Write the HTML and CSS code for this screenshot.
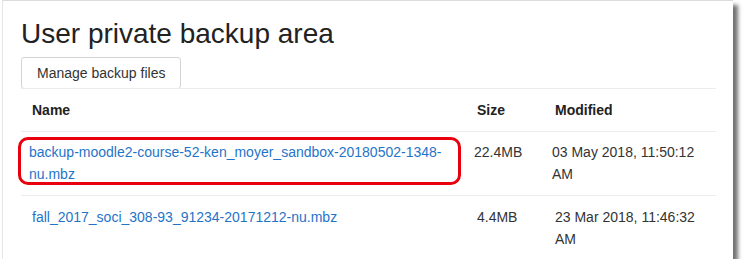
FILE: index.html
```html
<!DOCTYPE html>
<html lang="en">
<head>
  <meta charset="UTF-8">
  <title>User private backup area</title>
  <link rel="stylesheet" href="styles.css">
</head>
<body>
  <div class="card">
    <h2>User private backup area</h2>
    <button class="btn">Manage backup files</button>

    <table class="files">
      <thead>
        <tr>
          <th class="col-name">Name</th>
          <th class="col-size">Size</th>
          <th class="col-date">Modified</th>
        </tr>
      </thead>
      <tbody>
        <tr class="picked">
          <td>
            <a href="#">backup-moodle2-course-52-ken_moyer_sandbox-20180502-1348-nu.mbz</a>
            <span class="callout"></span>
          </td>
          <td>22.4MB</td>
          <td>03 May 2018, 11:50:12 AM</td>
        </tr>
        <tr>
          <td><a href="#">fall_2017_soci_308-93_91234-20171212-nu.mbz</a></td>
          <td>4.4MB</td>
          <td>23 Mar 2018, 11:46:32 AM</td>
        </tr>
      </tbody>
    </table>
  </div>
</body>
</html>
```

FILE: styles.css
```css
body {
  margin: 0;
  background: white;
  font-family: "Liberation Sans", Arial, sans-serif;
  color: #333;
  font-size: 14px;
}
.card {
  margin-left: 2px;
  width: 731px;
  height: 259px;
  padding: 16px 0 0 18px;
  box-sizing: border-box;
  background: white;
  border-top: 1px solid #dcdcdc;
  border-left: 1px solid #e6e6e6;
  box-shadow: 5px 5px 4px rgba(0,0,0,0.55);
  overflow: hidden;
}
h2 {
  margin: 0 0 6px 0;
  font-size: 28px;
  font-weight: normal;
  line-height: 34px;
  color: #222;
}
.btn {
  display: block;
  font-family: inherit;
  font-size: 14px;
  line-height: 20px;
  color: #333;
  background: white;
  border: 1px solid #d4d4d4;
  border-radius: 3px;
  padding: 5px 15px;
}
.files {
  width: 695px;
  border-collapse: collapse;
  margin-top: -1px;
}
.files th,
.files td {
  text-align: left;
  vertical-align: top;
  padding: 10px 12px 10px 11px;
  line-height: 22px;
  border-top: 1px solid #ececec;
}
.files th {
  font-weight: bold;
  color: #222;
}
.col-name {
  width: 422px;
}
.col-size {
  width: 55px;
}
.files a {
  color: #1f74c9;
  text-decoration: none;
}
.picked td {
  position: relative;
  padding-left: 8px;
  padding-top: 9px;
}
.callout {
  position: absolute;
  left: -3px;
  top: 5px;
  width: 443px;
  height: 48px;
  box-sizing: border-box;
  border: 3px solid #e8000f;
  border-radius: 10px;
}
```
